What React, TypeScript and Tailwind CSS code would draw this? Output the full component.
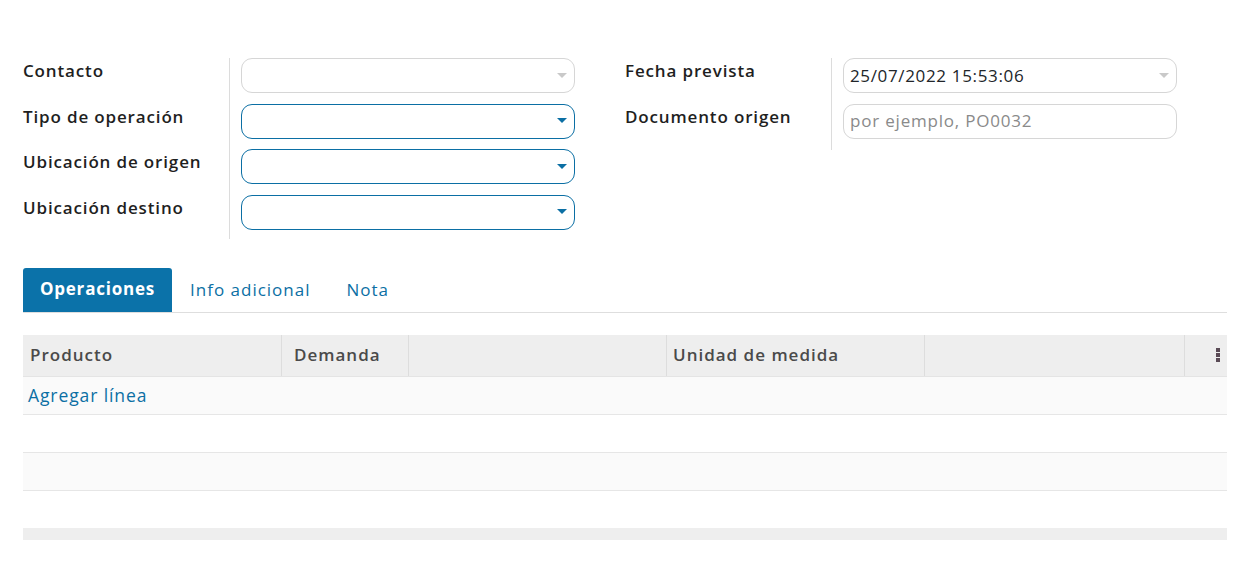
import React from "react";

const font = { fontFamily: "'Open Sans', 'DejaVu Sans', sans-serif" };

function Caret({ blue }: { blue?: boolean }) {
  return (
    <svg width="10" height="6" viewBox="0 0 10 6" className="absolute right-[7px] top-1/2 -translate-y-1/2">
      <path d="M0 0 L10 0 L5 5 Z" fill={blue ? "#0b6fa4" : "#c9c9c9"} />
    </svg>
  );
}

function Select({ blue, value }: { blue?: boolean; value?: string }) {
  return (
    <div
      className={`relative h-[35px] w-[334px] rounded-[11px] border bg-white flex items-center px-[6px] text-[17px] tracking-[0.65px] text-[#212529] ${
        blue ? "border-[#0b6fa4]" : "border-[#d6d6d6]"
      }`}
    >
      {value}
      <Caret blue={blue} />
    </div>
  );
}

function Label({ children }: { children: React.ReactNode }) {
  return (
    <div className="h-[35px] text-[17px] font-semibold text-[#1f1f1f] leading-[25px] tracking-[0.85px]">{children}</div>
  );
}

export default function App() {
  return (
    <div className="w-[1251px] h-[561px] bg-white" style={font}>
      <div className="pt-[58px] pl-[23px] pr-[24px]">
        <div className="flex">
          {/* left group */}
          <div className="flex w-[602px]">
            <div className="w-[206px] flex flex-col gap-[10.5px] pb-[9px]">
              <Label>Contacto</Label>
              <Label>Tipo de operación</Label>
              <Label>Ubicación de origen</Label>
              <Label>Ubicación destino</Label>
            </div>
            <div className="w-px bg-[#dcdcdc]" />
            <div className="pl-[11px] flex flex-col gap-[10.5px]">
              <Select />
              <Select blue />
              <Select blue />
              <Select blue />
            </div>
          </div>
          {/* right group */}
          <div className="flex self-start">
            <div className="w-[206px] flex flex-col gap-[10.5px] pb-[11px]">
              <Label>Fecha prevista</Label>
              <Label>Documento origen</Label>
            </div>
            <div className="w-px bg-[#dcdcdc]" />
            <div className="pl-[11px] flex flex-col gap-[10.5px]">
              <Select value="25/07/2022 15:53:06" />
              <div className="h-[35px] w-[334px] rounded-[11px] border border-[#d6d6d6] flex items-center px-[6px] text-[17px] tracking-[0.8px] text-[#8a8a8a]">
                por ejemplo, PO0032
              </div>
            </div>
          </div>
        </div>

        {/* tabs */}
        <div className="mt-[29px] flex items-end border-b border-[#dedede] h-[45px]">
          <div className="h-[44px] w-[149px] bg-[#0b72a9] rounded-t-[3px] text-white font-bold text-[17px] tracking-[0.8px] flex items-center justify-center pb-[2px]">
            Operaciones
          </div>
          <div className="h-[44px] flex items-center pl-[18px] text-[17px] tracking-[1px] text-[#0b6fa4]">Info adicional</div>
          <div className="h-[44px] flex items-center pl-[36px] text-[17px] tracking-[1px] text-[#0b6fa4]">Nota</div>
        </div>

        {/* table */}
        <div className="mt-[22px]">
          <div className="flex h-[42px] bg-[#eeeeee] border-b border-[#e4e4e4] text-[17px] tracking-[1px] font-semibold text-[#4a4a4a]">
            <div className="w-[259px] border-r border-[#dddddd] flex items-center pl-[7px]">Producto</div>
            <div className="w-[127px] border-r border-[#dddddd] flex items-center pl-[12px]">Demanda</div>
            <div className="w-[258px] border-r border-[#dddddd]" />
            <div className="w-[258px] border-r border-[#dddddd] flex items-center pl-[6px]">Unidad de medida</div>
            <div className="w-[260px] border-r border-[#dddddd]" />
            <div className="flex-1 flex items-center justify-end pr-[7px]">
              <svg width="4" height="14" viewBox="0 0 4 14">
                <rect x="0" y="0" width="4" height="4" fill="#5a4a55" />
                <rect x="0" y="5" width="4" height="4" fill="#5a4a55" />
                <rect x="0" y="10" width="4" height="4" fill="#5a4a55" />
              </svg>
            </div>
          </div>
          <div className="h-[38px] bg-[#fafafa] border-b border-[#e6e6e6] flex items-center pl-[5px] text-[17.5px] tracking-[0.9px] text-[#0b6fa4]">
            Agregar línea
          </div>
          <div className="h-[38px] bg-white border-b border-[#e6e6e6]" />
          <div className="h-[38px] bg-[#fafafa] border-b border-[#e6e6e6]" />
          <div className="h-[37px] bg-white" />
          <div className="h-[12px] bg-[#eeeeee]" />
        </div>
      </div>
    </div>
  );
}
